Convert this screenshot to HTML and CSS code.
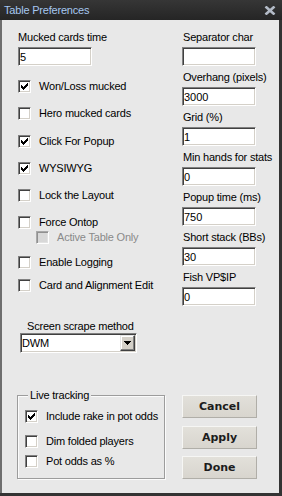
FILE: index.html
```html
<!DOCTYPE html>
<html lang="en">
<head>
    <meta charset="UTF-8">
    <title>Table Preferences</title>
    <link rel="stylesheet" href="styles.css">
</head>
<body>
    <div class="window">
        <div class="titlebar">
            <span class="title">Table Preferences</span>
            <svg class="close" width="12" height="9" viewBox="0 0 12 9">
                <path d="M1.5 0.5l9 8M10.5 0.5l-9 8" stroke="#b3bbc7" stroke-width="2.6"/>
            </svg>
        </div>
        <div class="panel">
            <div class="col-left">
                <div class="field-label">Mucked cards time</div>
                <input class="textbox" type="text" value="5">

                <div class="check checked"><span class="box"><svg viewBox="0 0 11 11"><path d="M2 4h1v3h-1zM3 5h1v3h-1zM4 6h1v3h-1zM5 5h1v3h-1zM6 4h1v3h-1zM7 3h1v3h-1zM8 2h1v3h-1z"/></svg></span>Won/Loss mucked</div>
                <div class="check"><span class="box"></span>Hero mucked cards</div>
                <div class="check loose checked"><span class="box"><svg viewBox="0 0 11 11"><path d="M2 4h1v3h-1zM3 5h1v3h-1zM4 6h1v3h-1zM5 5h1v3h-1zM6 4h1v3h-1zM7 3h1v3h-1zM8 2h1v3h-1z"/></svg></span>Click For Popup</div>
                <div class="check checked"><span class="box"><svg viewBox="0 0 11 11"><path d="M2 4h1v3h-1zM3 5h1v3h-1zM4 6h1v3h-1zM5 5h1v3h-1zM6 4h1v3h-1zM7 3h1v3h-1zM8 2h1v3h-1z"/></svg></span>WYSIWYG</div>
                <div class="check"><span class="box"></span>Lock the Layout</div>
                <div class="check"><span class="box"></span>Force Ontop</div>
                <div class="check sub disabled"><span class="box"></span>Active Table Only</div>
                <div class="check gap-12"><span class="box"></span>Enable Logging</div>
                <div class="check gap-10"><span class="box"></span>Card and Alignment Edit</div>

                <div class="field-label scrape-label">Screen scrape method</div>
                <div class="select">
                    <span class="select-value">DWM</span>
                    <span class="drop">
                        <svg width="7" height="4" viewBox="0 0 7 4"><path d="M0 0h7v1h-1v1h-1v1h-1v1h-1v-1h-1v-1h-1v-1h-1z"/></svg>
                    </span>
                </div>

                <div class="group">
                    <span class="group-title">Live tracking</span>
                    <div class="check first checked"><span class="box"><svg viewBox="0 0 11 11"><path d="M2 4h1v3h-1zM3 5h1v3h-1zM4 6h1v3h-1zM5 5h1v3h-1zM6 4h1v3h-1zM7 3h1v3h-1zM8 2h1v3h-1z"/></svg></span>Include rake in pot odds</div>
                    <div class="check gap-12"><span class="box"></span>Dim folded players</div>
                    <div class="check gap-7"><span class="box"></span>Pot odds as %</div>
                </div>
            </div>

            <div class="col-right">
                <div class="field-label">Separator char</div>
                <input class="textbox" type="text" value="">
                <div class="field-label">Overhang (pixels)</div>
                <input class="textbox" type="text" value="3000">
                <div class="field-label">Grid (%)</div>
                <input class="textbox" type="text" value="1">
                <div class="field-label">Min hands for stats</div>
                <input class="textbox" type="text" value="0">
                <div class="field-label">Popup time (ms)</div>
                <input class="textbox" type="text" value="750">
                <div class="field-label">Short stack (BBs)</div>
                <input class="textbox" type="text" value="30">
                <div class="field-label">Fish VP$IP</div>
                <input class="textbox" type="text" value="0">

                <div class="buttons">
                    <button class="btn">Cancel</button>
                    <button class="btn">Apply</button>
                    <button class="btn">Done</button>
                </div>
            </div>
        </div>
    </div>
</body>
</html>
```

FILE: styles.css
```css
/* Dialog frame */
body {
    margin: 0;
    background: #2e2e2e;
    font-family: "Liberation Sans", Arial, sans-serif;
    font-size: 11px;
    color: #000;
}
.window {
    width: 282px;
    height: 496px;
    box-sizing: border-box;
    display: flex;
    flex-direction: column;
    background: #333;
    padding: 0 3px 3px 0;
}
.titlebar {
    height: 20px;
    flex: none;
    display: flex;
    align-items: center;
    justify-content: space-between;
    margin-right: -3px;
    padding: 0 6px 0 4px;
    background: linear-gradient(#363636, #252525);
}
.title {
    color: #a6c7f0;
    line-height: 20px;
    letter-spacing: -0.2px;
}
.close {
    margin-top: 1px;
}
.panel {
    flex: 1;
    display: grid;
    grid-template-columns: 146px 75px;
    grid-template-rows: 1fr;
    column-gap: 18px;
    padding: 10px 0 14px 16px;
    background: #e8e8e8;
    border-left: 2px solid #6e6e6e;
    letter-spacing: -0.2px;
}

/* Columns */
.col-left,
.col-right {
    display: flex;
    flex-direction: column;
    align-items: flex-start;
}
.field-label {
    line-height: 14px;
    white-space: nowrap;
}
.col-right .field-label {
    margin-left: 1px;
}
.col-right .textbox + .field-label {
    margin-top: 4px;
}
.textbox {
    width: 74px;
    height: 19px;
    box-sizing: border-box;
    margin: 3px 0 0;
    padding: 0 1px;
    font: inherit;
    color: #000;
    background: #fff;
    border: 1px solid;
    border-color: #808080 #fff #fff #808080;
    box-shadow: inset 1px 1px 0 #404040, inset -1px -1px 0 #d4d0c8;
    outline: none;
}

/* Checkboxes */
.check {
    display: flex;
    align-items: center;
    gap: 8px;
    height: 13px;
    line-height: 13px;
    margin-top: 14px;
    white-space: nowrap;
}
.check.loose { margin-top: 15px; }
.check.gap-12 { margin-top: 12px; }
.check.gap-10 { margin-top: 10px; }
.check.gap-7 { margin-top: 7px; }
.check.sub {
    margin-top: 2px;
    margin-left: 18px;
}
.box {
    width: 13px;
    height: 13px;
    box-sizing: border-box;
    flex: none;
    background: #fff;
    border: 1px solid;
    border-color: #808080 #fff #fff #808080;
    box-shadow: inset 1px 1px 0 #404040, inset -1px -1px 0 #d4d0c8;
}
.box svg {
    display: block;
    width: 11px;
    height: 11px;
    fill: #000;
    shape-rendering: crispEdges;
}
.check.disabled {
    color: #8a8a8a;
}
.check.disabled .box {
    background: #d8d8d8;
    border-color: #a8a8a8 #fff #fff #a8a8a8;
    box-shadow: inset 1px 1px 0 #909090, inset -1px -1px 0 #e2e2e2;
}

/* Screen scrape select */
.scrape-label {
    margin: 27px 0 0 9px;
}
.select {
    width: 117px;
    height: 20px;
    box-sizing: border-box;
    margin-left: 2px;
    display: flex;
    align-items: center;
    padding-left: 1px;
    background: #fff;
    border: 1px solid;
    border-color: #808080 #fff #fff #808080;
    box-shadow: inset 1px 1px 0 #404040, inset -1px -1px 0 #d4d0c8;
}
.select-value {
    flex: 1;
}
.drop {
    width: 15px;
    height: 16px;
    box-sizing: border-box;
    margin-right: 1px;
    display: flex;
    align-items: center;
    justify-content: center;
    background: #d4d0c8;
    border: 1px solid;
    border-color: #e4e4e4 #404040 #404040 #e4e4e4;
    box-shadow: inset -1px -1px 0 #808080, inset 1px 1px 0 #fff;
}
.drop svg {
    display: block;
    fill: #000;
    shape-rendering: crispEdges;
}

/* Live tracking group */
.group {
    position: relative;
    width: 148px;
    height: 84px;
    box-sizing: border-box;
    margin: auto 0 0 -1px;
    padding-left: 7px;
    border: 1px solid #9c9c9c;
    box-shadow: inset 1px 1px 0 #fbfbfb, 1px 1px 0 #fbfbfb;
}
.group-title {
    position: absolute;
    top: -8px;
    left: 10px;
    padding: 0 2px;
    line-height: 14px;
    background: #e8e8e8;
}
.group .check.first {
    margin-top: 14px;
}

/* Buttons */
.buttons {
    margin-top: auto;
    display: flex;
    flex-direction: column;
}
.btn {
    width: 75px;
    height: 23px;
    padding: 0;
    font-family: "DejaVu Sans", Verdana, sans-serif;
    font-size: 11px;
    font-weight: bold;
    letter-spacing: 0;
    color: #1c1c1c;
    background: linear-gradient(#e2e0da, #d8d5ce);
    border: 1px solid;
    border-color: #f6f6f4 #b0aea8 #b0aea8 #f6f6f4;
    border-radius: 0;
}
.btn + .btn {
    margin-top: 8px;
}
.btn:last-child {
    margin-top: 7px;
}
```
